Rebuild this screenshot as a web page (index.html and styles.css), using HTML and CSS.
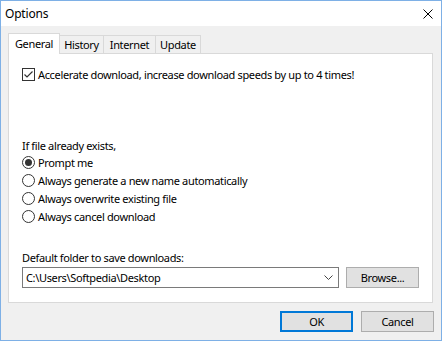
FILE: index.html
```html
<!DOCTYPE html>
<html lang="en">
<head>
  <meta charset="UTF-8">
  <title>Options</title>
  <link rel="stylesheet" href="styles.css">
</head>
<body>

  <div class="window">

    <!-- Title bar -->
    <div class="titlebar">
      <span class="title">Options</span>
      <svg class="close" width="10" height="10" viewBox="0 0 10 10">
        <path d="M0.5 0.5 L9.5 9.5 M9.5 0.5 L0.5 9.5" stroke="#000" stroke-width="1" fill="none"/>
      </svg>
    </div>

    <div class="content">

      <!-- Tabs -->
      <div class="tabs">
        <div class="tab active">General</div>
        <div class="tab">History</div>
        <div class="tab">Internet</div>
        <div class="tab">Update</div>
      </div>

      <!-- General page -->
      <div class="panel">
        <label class="row check-row">
          <span class="checkbox">
            <svg width="11" height="11" viewBox="0 0 11 11">
              <path d="M1.5 5.5 L4 8 L9.5 2.5" stroke="#333" stroke-width="1.2" fill="none"/>
            </svg>
          </span>
          Accelerate download, increase download speeds by up to 4 times!
        </label>

        <div class="row heading">If file already exists,</div>

        <div class="radios">
          <label class="row radio-row"><span class="radio checked"></span>Prompt me</label>
          <label class="row radio-row"><span class="radio"></span>Always generate a new name automatically</label>
          <label class="row radio-row"><span class="radio"></span>Always overwrite existing file</label>
          <label class="row radio-row"><span class="radio"></span>Always cancel download</label>
        </div>

        <div class="row folder-label">Default folder to save downloads:</div>

        <div class="folder-row">
          <div class="combo">
            <span>C:\Users\Softpedia\Desktop</span>
            <svg class="chevron" width="9" height="5" viewBox="0 0 9 5">
              <path d="M0.5 0.5 L4.5 4.5 L8.5 0.5" stroke="#444" stroke-width="1" fill="none"/>
            </svg>
          </div>
          <button class="btn">Browse...</button>
        </div>
      </div>

      <!-- Dialog buttons -->
      <div class="footer">
        <button class="btn default">OK</button>
        <button class="btn">Cancel</button>
      </div>

    </div>
  </div>

</body>
</html>
```

FILE: styles.css
```css
* {
  margin: 0;
  padding: 0;
  box-sizing: border-box;
}

body {
  font-family: 'Noto Sans', 'DejaVu Sans', sans-serif;
  font-size: 11px;
  letter-spacing: -0.35px;
  color: #000;
  background: #fff;
}

.window {
  width: 442px;
  height: 341px;
  border: 1px solid #7eb0e6;
  background: #f0f0f0;
  display: flex;
  flex-direction: column;
}

.titlebar {
  height: 25px;
  background: #fff;
  display: flex;
  align-items: center;
  justify-content: space-between;
  padding: 0 8px 0 4px;
}

.title {
  font-size: 12px;
  letter-spacing: -0.2px;
  margin-top: -1px;
}

.close {
  display: block;
  margin-top: 1px;
}

.content {
  padding: 7px 7px 0 7px;
}

.tabs {
  display: flex;
  align-items: flex-end;
  height: 20px;
}

.tab {
  height: 18px;
  border: 1px solid #d9d9d9;
  border-bottom: none;
  background: #f0f0f0;
  margin-left: -1px;
  display: flex;
  align-items: center;
  justify-content: center;
}

.tab:nth-child(2) { width: 45px; }
.tab:nth-child(3) { width: 53px; }
.tab:nth-child(4) { width: 46px; }

.tab.active {
  width: 52px;
  height: 21px;
  margin-left: 0;
  margin-bottom: -1px;
  background: #fff;
  position: relative;
  z-index: 1;
  padding-bottom: 2px;
}

.panel {
  width: 425px;
  height: 250px;
  background: #fff;
  border: 1px solid #d9d9d9;
  padding: 0 13px;
}

.row {
  display: flex;
  align-items: center;
  height: 16px;
  white-space: nowrap;
}

.check-row {
  margin-top: 13px;
  height: 15px;
}

.checkbox {
  width: 13px;
  height: 13px;
  border: 1px solid #333;
  margin-right: 3px;
  display: flex;
  align-items: center;
  justify-content: center;
}

.checkbox svg {
  display: block;
}

.heading {
  margin-top: 55px;
}

.radio-row {
  height: 18px;
}

.radio {
  width: 13px;
  height: 13px;
  border: 1px solid #333;
  border-radius: 50%;
  margin-right: 3px;
  display: flex;
  align-items: center;
  justify-content: center;
}

.radio.checked::after {
  content: "";
  width: 7px;
  height: 7px;
  border-radius: 50%;
  background: #333;
}

.folder-label {
  margin-top: 24px;
}

.folder-row {
  display: flex;
  gap: 7px;
  margin-top: 2px;
}

.combo {
  width: 318px;
  height: 21px;
  border: 1px solid #7a7a7a;
  background: #fff;
  display: flex;
  align-items: center;
  justify-content: space-between;
  padding: 0 5px 0 3px;
}

.chevron {
  display: block;
}

.btn {
  width: 73px;
  height: 21px;
  font-family: inherit;
  font-size: 11px;
  letter-spacing: inherit;
  color: #000;
  background: #e1e1e1;
  border: 1px solid #adadad;
}

.btn.default {
  border: 2px solid #0078d7;
}

.footer {
  display: flex;
  justify-content: flex-end;
  gap: 8px;
  margin-top: 8px;
}
```
